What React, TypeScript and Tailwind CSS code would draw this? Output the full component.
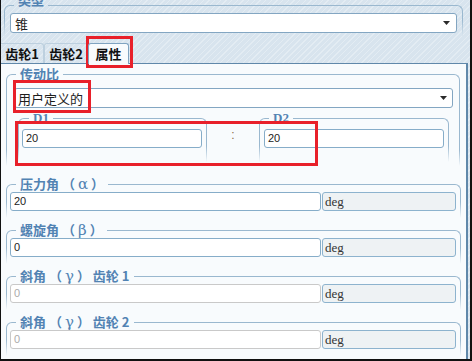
import React from "react";

const FADE_PANEL = "bg-linear-to-b from-transparent to-[#f8fbfd]";
const FADE_TOP = "bg-linear-to-b from-transparent to-[#dae6ef]";

function Arrow() {
  return (
    <svg width="7" height="4" viewBox="0 0 7 4" className="shrink-0">
      <path d="M0 0H7L3.5 4Z" fill="#2b2b2b" />
    </svg>
  );
}

function SelectBox({ text, className }: { text: string; className: string }) {
  return (
    <div
      className={`flex items-center justify-between h-[20px] bg-white border border-[#83a6c2] rounded-[3px] text-[13px] leading-none text-[#1e1e1e] ${className}`}
    >
      <span>{text}</span>
      <Arrow />
    </div>
  );
}

function Field({ value, disabled, className }: { value: string; disabled?: boolean; className: string }) {
  return (
    <div
      className={`h-[19px] flex items-center bg-white border rounded-[3px] pl-[3px] text-[11px] leading-none font-['Liberation_Sans',sans-serif] ${
        disabled ? "border-[#c9c9c9] text-[#ababab]" : "border-[#86adc9] text-[#222]"
      } ${className}`}
    >
      {value}
    </div>
  );
}

function Deg() {
  return (
    <div className="h-[19px] w-[134px] flex items-center bg-[#eef2f4] border border-[#8db3ce] rounded-[3px] pl-[2px] text-[13px] leading-none text-[#333] font-['Liberation_Serif',serif]">
      deg
    </div>
  );
}

function Group({
  legend,
  legendClass,
  className,
  fade,
  children,
}: {
  legend: React.ReactNode;
  legendClass: string;
  className: string;
  fade: string;
  children: React.ReactNode;
}) {
  return (
    <fieldset className={`relative border border-b-0 border-[#9ab8cf] rounded-t-[6px] ${className}`}>
      <legend className={legendClass}>{legend}</legend>
      {children}
      <span className={`absolute -left-px bottom-0 w-px h-[16px] ${fade}`} />
      <span className={`absolute -right-px bottom-0 w-px h-[16px] ${fade}`} />
    </fieldset>
  );
}

const LEG = "px-1 text-[13px] leading-4 font-bold text-[#5283b3]";

function G({ c }: { c: string }) {
  return <span className="mx-[3px] text-[15px] leading-4 font-['DejaVu_Serif',serif] font-normal">{c}</span>;
}

function AngleGroup({ legend, value, disabled, first }: { legend: React.ReactNode; value: string; disabled?: boolean; first?: boolean }) {
  return (
    <Group
      legend={legend}
      legendClass={`ml-[6px] ${LEG}`}
      className={`ml-[5px] w-[455px] pl-[3px] pr-[4px] pb-[7px] ${first ? "mt-[10px]" : "mt-[4px]"}`}
      fade={FADE_PANEL}
    >
      <div className="flex gap-[1px]">
        <Field value={value} disabled={disabled} className="w-[311px]" />
        <Deg />
      </div>
    </Group>
  );
}

export default function App() {
  return (
    <div className="relative w-[472px] h-[361px] overflow-hidden flex flex-col border-l border-r-2 border-b-2 border-[#111] bg-[repeating-linear-gradient(135deg,#d8e4ee_0px,#d8e4ee_3px,#e3ecf3_3px,#e3ecf3_4px)] font-['Noto_Sans_CJK_SC',sans-serif]">
      {/* 类型 */}
      <Group
        legend={<span className="block -translate-y-[5px]">类型</span>}
        legendClass={`ml-[4px] ${LEG}`}
        className="ml-[3px] -mt-[3px] w-[459px] pl-[5px] pr-[5px] pb-[3px] shrink-0"
        fade={FADE_TOP}
      >
        <SelectBox text="锥" className="w-[447px] pl-[4px] pr-[6px]" />
      </Group>

      {/* tabs */}
      <div className="flex items-end h-[27px] shrink-0 text-[13px] font-bold text-[#111]">
        <div className="w-[43px] h-[20px] flex items-center justify-center border-t border-r border-[#bdd0df] rounded-tr-[3px]">
          齿轮1
        </div>
        <div className="w-[44px] h-[20px] flex items-center justify-center border-t border-x border-[#bdd0df] rounded-t-[3px]">
          齿轮2
        </div>
        <div className="relative z-10 w-[41px] h-[21px] -mb-px flex items-center justify-center border-t border-x border-[#7fa3c0] rounded-t-[3px] bg-[#f8fbfd]">
          属性
        </div>
      </div>

      {/* panel */}
      <div className="flex-1 mr-[2px] flex flex-col border-t border-r-2 border-[#6088aa] bg-[#f8fbfd]">
        <Group
          legend="传动比"
          legendClass={`ml-[2px] ${LEG}`}
          className="ml-[5px] mt-[2px] w-[454px] pl-[7px] pr-[6px] pb-[4px]"
          fade={FADE_PANEL}
        >
          <SelectBox text="用户定义的" className="mt-[6px] w-[439px] pl-[3px] pr-[5px]" />
          <div className="flex mt-[3px]">
            <Group
              legend="D1"
              legendClass="ml-[7px] px-1 text-[13px] leading-[14px] font-bold text-[#5283b3] font-['Liberation_Serif',serif]"
              className="ml-[4px] w-[189px] pl-[3px] pr-[4px] pb-[14px]"
              fade={FADE_PANEL}
            >
              <Field value="20" className="mt-[4px] w-[180px]" />
            </Group>
            <div className="w-[52px] flex justify-center pt-[18px] text-[12px] leading-[12px] text-[#8a6d4a] font-['Liberation_Sans',sans-serif]">
              :
            </div>
            <Group
              legend="D2"
              legendClass="ml-[5px] px-1 text-[13px] leading-[14px] font-bold text-[#5283b3] font-['Liberation_Serif',serif]"
              className="w-[190px] pl-[4px] pr-[4px] pb-[14px]"
              fade={FADE_PANEL}
            >
              <Field value="20" className="mt-[4px] w-[180px]" />
            </Group>
          </div>
        </Group>

        <AngleGroup legend={<>压力角 （<G c="α" />）</>} value="20" first />
        <AngleGroup legend={<>螺旋角 （<G c="β" />）</>} value="0" />
        <AngleGroup legend={<>斜角 （<G c="γ" />） 齿轮 1</>} value="0" disabled />
        <AngleGroup legend={<>斜角 （<G c="γ" />） 齿轮 2</>} value="0" disabled />
      </div>

      {/* annotation boxes */}
      <div className="absolute left-[85px] top-[36px] w-[47px] h-[32px] border-[3px] border-[#e8202a]" />
      <div className="absolute left-[12px] top-[80px] w-[78px] h-[33px] border-[3px] border-[#e8202a]" />
      <div className="absolute left-[14px] top-[121px] w-[303px] h-[45px] border-[3px] border-[#e8202a]" />
    </div>
  );
}
